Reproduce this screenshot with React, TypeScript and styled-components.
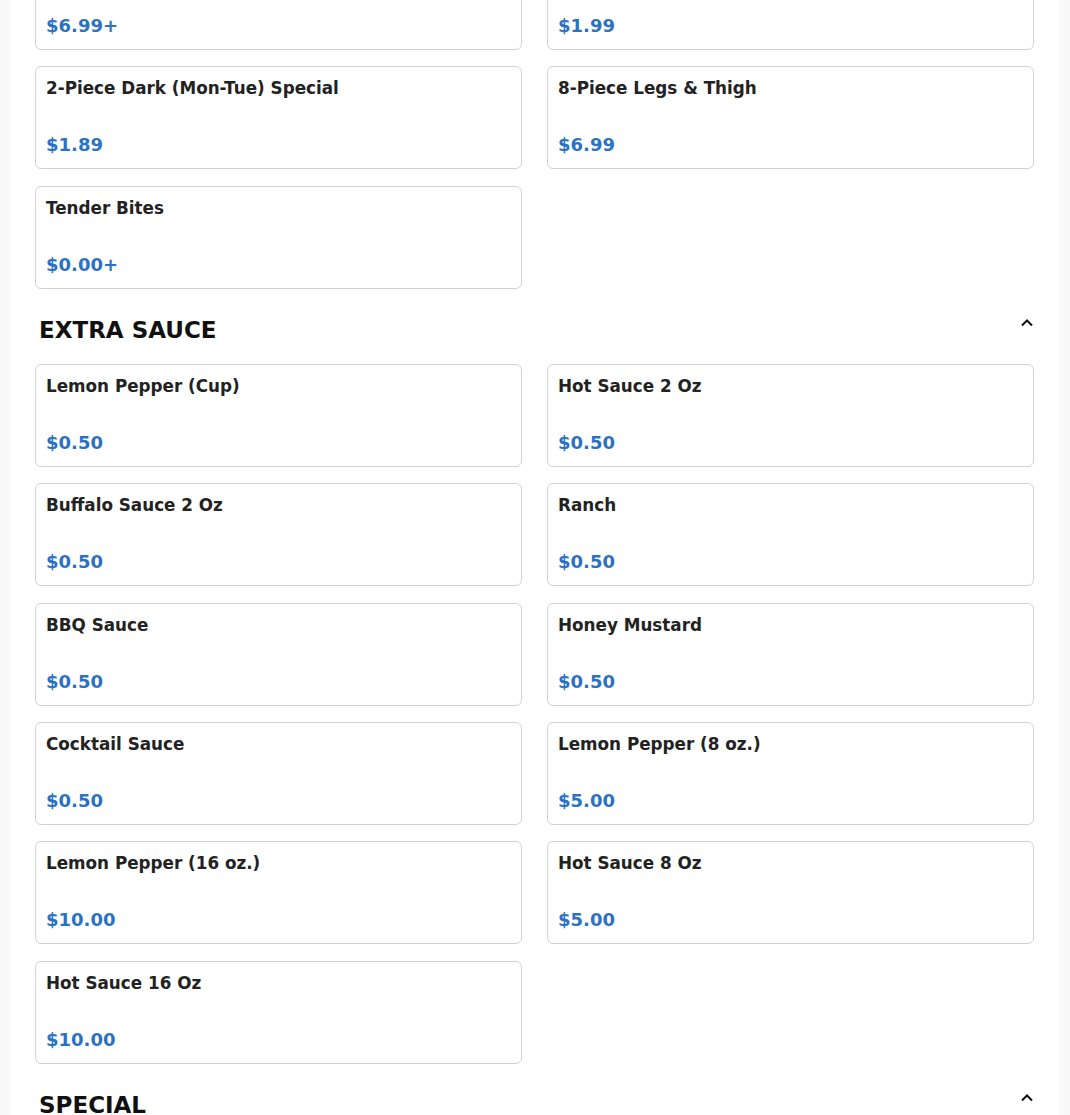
import styled, { createGlobalStyle } from "styled-components";

type Item = {
  name: string;
  price: string;
};

type Section = {
  title: string;
  items: Item[];
};

const topItems: Item[] = [
  { name: "Family Meal", price: "$6.99+" },
  { name: "1-Piece Wing", price: "$1.99" },
  { name: "2-Piece Dark (Mon-Tue) Special", price: "$1.89" },
  { name: "8-Piece Legs & Thigh", price: "$6.99" },
  { name: "Tender Bites", price: "$0.00+" },
];

const sections: Section[] = [
  {
    title: "EXTRA SAUCE",
    items: [
      { name: "Lemon Pepper (Cup)", price: "$0.50" },
      { name: "Hot Sauce 2 Oz", price: "$0.50" },
      { name: "Buffalo Sauce 2 Oz", price: "$0.50" },
      { name: "Ranch", price: "$0.50" },
      { name: "BBQ Sauce", price: "$0.50" },
      { name: "Honey Mustard", price: "$0.50" },
      { name: "Cocktail Sauce", price: "$0.50" },
      { name: "Lemon Pepper (8 oz.)", price: "$5.00" },
      { name: "Lemon Pepper (16 oz.)", price: "$10.00" },
      { name: "Hot Sauce 8 Oz", price: "$5.00" },
      { name: "Hot Sauce 16 Oz", price: "$10.00" },
    ],
  },
  { title: "SPECIAL", items: [] },
];

export default function App() {
  return (
    <>
      <GlobalStyle />
      <Panel>
        <Grid>
          {topItems.map((item) => (
            <Card key={item.name} item={item} />
          ))}
        </Grid>
        {sections.map((section) => (
          <div key={section.title}>
            <SectionHeader>
              <SectionTitle>{section.title}</SectionTitle>
              <Chevron width="14" height="14" viewBox="0 0 14 14">
                <path d="M2 9.5 L7 4.5 L12 9.5" fill="none" stroke="#111" strokeWidth="2" />
              </Chevron>
            </SectionHeader>
            {section.items.length > 0 && (
              <Grid>
                {section.items.map((item) => (
                  <Card key={item.name} item={item} />
                ))}
              </Grid>
            )}
          </div>
        ))}
      </Panel>
    </>
  );
}

function Card({ item }: { item: Item }) {
  return (
    <CardBox>
      <ItemName>{item.name}</ItemName>
      <ItemPrice>{item.price}</ItemPrice>
    </CardBox>
  );
}

const GlobalStyle = createGlobalStyle`
  html, body {
    margin: 0;
    padding: 0;
    background: #f9f9f9;
    font-family: "DejaVu Sans", "Liberation Sans", sans-serif;
    overflow: hidden;
  }
`;

const Panel = styled.div`
  margin: -53px 11px 0 10px;
  background: #ffffff;
  padding: 0 25px 40px 25px;
  min-height: 1200px;
`;

const Grid = styled.div`
  display: grid;
  grid-template-columns: 1fr 1fr;
  column-gap: 25px;
  row-gap: 16.4px;
`;

const CardBox = styled.div`
  height: 103px;
  box-sizing: border-box;
  border: 1px solid #d2d2d2;
  border-radius: 6px;
  padding: 10px 10px 11px 10px;
  display: flex;
  flex-direction: column;
  justify-content: space-between;
`;

const ItemName = styled.div`
  font-size: 16.8px;
  font-weight: bold;
  line-height: 22px;
  color: #222222;
`;

const ItemPrice = styled.div`
  font-size: 18px;
  font-weight: bold;
  line-height: 24px;
  color: #2b72c2;
`;

const SectionHeader = styled.div`
  display: flex;
  justify-content: space-between;
  align-items: flex-start;
  padding: 26px 0 19px 4px;
`;

const SectionTitle = styled.h2`
  margin: 0;
  font-size: 23px;
  font-weight: bold;
  line-height: 30px;
  color: #111111;
`;

const Chevron = styled.svg`
  display: block;
  margin-top: 1px;
`;
